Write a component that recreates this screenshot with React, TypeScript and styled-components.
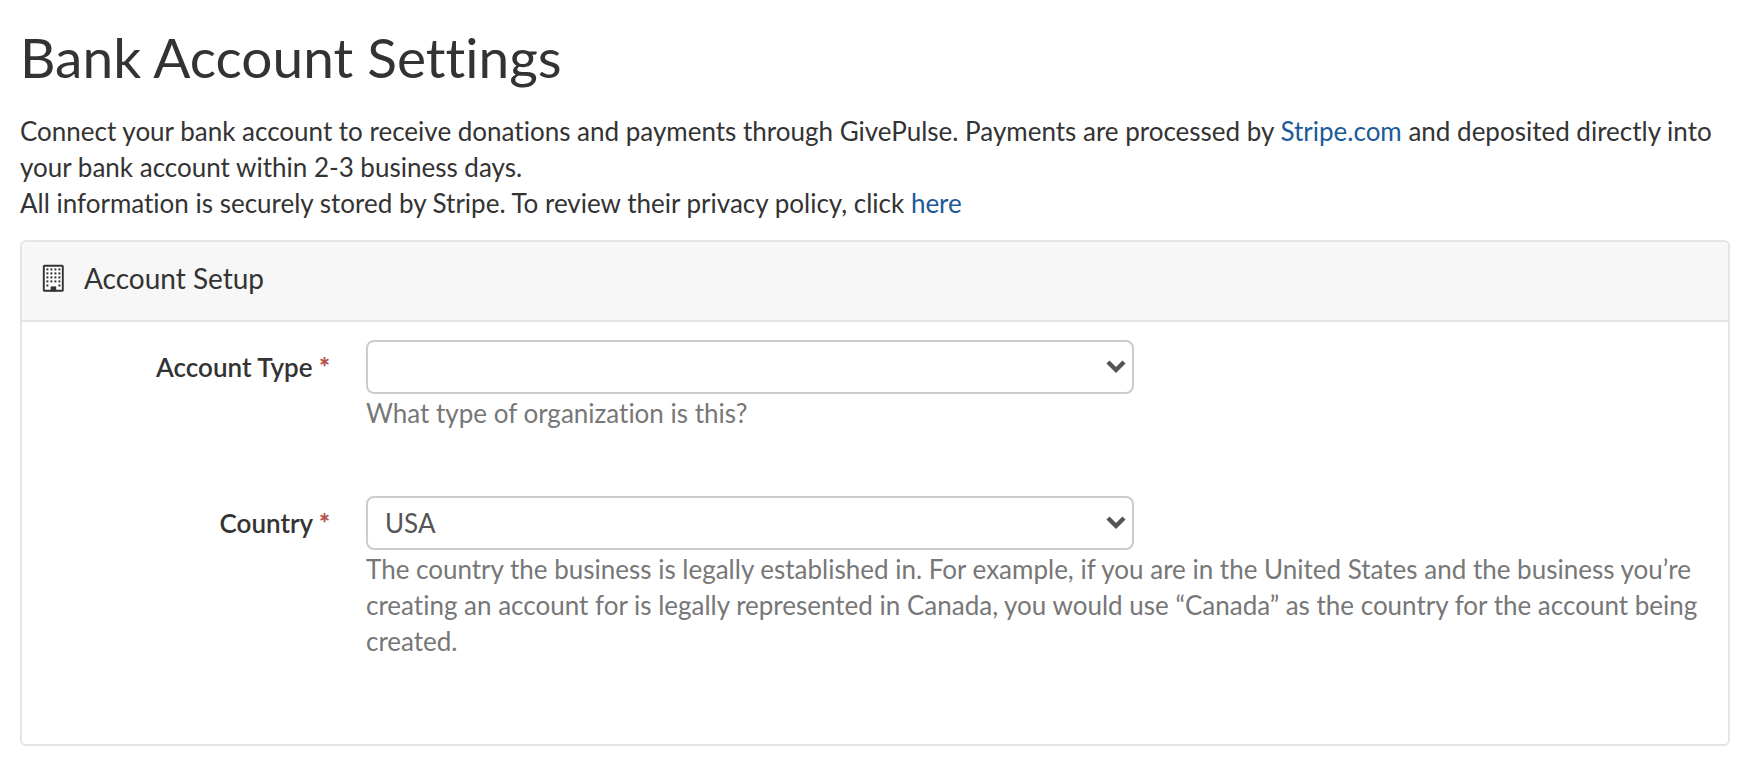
import React from "react";
import styled, { createGlobalStyle } from "styled-components";

const GlobalStyle = createGlobalStyle`
  *, *::before, *::after { box-sizing: border-box; }
  body {
    margin: 0;
    background: #fff;
    color: #333;
    font-family: Lato, "Liberation Sans", sans-serif;
    font-size: 26px;
    font-variant-ligatures: none;
    line-height: 36px;
  }
`;

const Page = styled.main`
  padding: 24px 18px 30px 20px;
`;

const Title = styled.h1`
  margin: 0 0 23px;
  font-size: 55px;
  font-weight: 400;
  line-height: 66px;
`;

const Intro = styled.p`
  margin: 0 0 19px;
`;

const TextLink = styled.a`
  color: #1c5a99;
  text-decoration: none;
`;

const Panel = styled.section`
  border: 2px solid #e5e5e5;
  border-radius: 6px;
  overflow: hidden;
`;

const PanelHeader = styled.header`
  display: flex;
  align-items: center;
  gap: 20px;
  padding: 18px 20px 24px;
  border-bottom: 2px solid #e5e5e5;
  background: #f7f7f7;
`;

const PanelTitle = styled.h2`
  margin: 0;
  font-size: 28px;
  font-weight: 400;
  line-height: 36px;
`;

const PanelBody = styled.form`
  display: flex;
  flex-direction: column;
  gap: 65px;
  padding: 18px 18px 85px;
`;

const FormRow = styled.div`
  display: grid;
  grid-template-columns: 290px minmax(0, 1fr);
  column-gap: 36px;
`;

const FieldLabel = styled.label`
  padding-top: 9px;
  font-weight: 600;
  text-align: right;
`;

const Required = styled.span`
  color: #b5504b;
  font-weight: 900;
`;

const SelectBox = styled.div`
  position: relative;
  max-width: 768px;
`;

const Select = styled.select`
  display: block;
  width: 100%;
  height: 54px;
  padding: 0 48px 0 17px;
  border: 2px solid #ccc;
  border-radius: 8px;
  appearance: none;
  background: #fff;
  color: #555;
  font: inherit;
`;

const Chevron = styled.svg`
  position: absolute;
  top: 20px;
  right: 8px;
  pointer-events: none;
`;

const HelpText = styled.p`
  margin: 1px 0 0;
  color: #777;
`;

function BuildingIcon() {
  const rows = [4, 8, 12, 16];
  const columns = [4, 8, 12, 16];
  return (
    <svg width="22" height="28" viewBox="0 0 22 28" aria-hidden="true">
      <rect x="1.8" y="1.8" width="19" height="25" rx="0.6" fill="#fff" stroke="#333" strokeWidth="1.9" />
      {rows.map((y) =>
        columns.map((x) => <rect key={`${x}-${y}`} x={x + 0.4} y={y + 0.4} width="2" height="2" fill="#333" />)
      )}
      <path d="M4.4 20.4h2v2h-2zM16.4 20.4h2v2h-2z" fill="#333" />
      <path d="M8.6 22.4h5.6v5H8.6z" fill="#333" />
    </svg>
  );
}

interface SelectFieldProps {
  id: string;
  label: string;
  options: string[];
  help: string;
}

function SelectField({ id, label, options, help }: SelectFieldProps) {
  return (
    <FormRow>
      <FieldLabel htmlFor={id}>
        {label} <Required>*</Required>
      </FieldLabel>
      <div>
        <SelectBox>
          <Select id={id} required aria-describedby={`${id}-help`}>
            {options.map((option) => (
              <option key={option}>{option}</option>
            ))}
          </Select>
          <Chevron width="20" height="14" viewBox="0 0 20 14" aria-hidden="true">
            <path d="M2 2l8 8 8-8" fill="none" stroke="#555" strokeWidth="4.4" />
          </Chevron>
        </SelectBox>
        <HelpText id={`${id}-help`}>{help}</HelpText>
      </div>
    </FormRow>
  );
}

export default function App() {
  return (
    <>
      <GlobalStyle />
      <Page>
        <Title>Bank Account Settings</Title>
        <Intro>
          Connect your bank account to receive donations and payments through GivePulse. Payments are processed by{" "}
          <TextLink href="#stripe">Stripe.com</TextLink> and deposited directly into your bank account within 2-3
          business days.
          <br />
          All information is securely stored by Stripe. To review their privacy policy, click{" "}
          <TextLink href="#privacy">here</TextLink>
        </Intro>
        <Panel>
          <PanelHeader>
            <BuildingIcon />
            <PanelTitle>Account Setup</PanelTitle>
          </PanelHeader>
          <PanelBody>
            <SelectField
              id="account-type"
              label="Account Type"
              options={["", "Individual", "Company"]}
              help="What type of organization is this?"
            />
            <SelectField
              id="country"
              label="Country"
              options={["USA", "Canada"]}
              help="The country the business is legally established in. For example, if you are in the United States and the business you’re creating an account for is legally represented in Canada, you would use “Canada” as the country for the account being created."
            />
          </PanelBody>
        </Panel>
      </Page>
    </>
  );
}
